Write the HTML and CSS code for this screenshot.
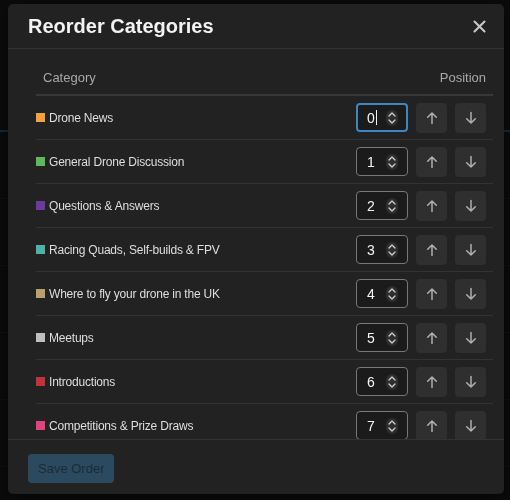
FILE: index.html
```html
<!DOCTYPE html>
<html lang="en">
<head>
  <meta charset="UTF-8" />
  <meta name="viewport" content="width=device-width, initial-scale=1.0" />
  <title>Reorder Categories</title>
  <link rel="stylesheet" href="styles.css">
</head>
<body>
  <!-- forum page behind the dialog, dimmed by the backdrop -->
  <div class="page">
    <div class="page-row link"></div>
    <div class="page-row"></div>
    <div class="page-row"></div>
    <div class="page-row"></div>
    <div class="page-row"></div>
    <div class="page-row"></div>
  </div>
  <div class="backdrop"></div>

  <div class="modal">
    <div class="modal-header">
      <h2 class="modal-title">Reorder Categories</h2>
      <button class="close-btn" title="close">
        <svg width="13" height="13" viewBox="0 0 13 13">
          <path d="M1.5 1.5 L11.5 11.5 M11.5 1.5 L1.5 11.5" stroke="#c8c8c8" stroke-width="2.1" stroke-linecap="round" />
        </svg>
      </button>
    </div>

    <div class="modal-body">
      <table class="reorder-table">
        <thead>
          <tr>
            <th class="col-name">Category</th>
            <th class="col-pos">Position</th>
          </tr>
        </thead>
        <tbody id="rows"></tbody>
      </table>
    </div>

    <div class="modal-footer">
      <button class="save-btn" disabled>Save Order</button>
    </div>
  </div>

  <script>
    var categories = [
      { name: "Drone News", color: "#f5a23e" },
      { name: "General Drone Discussion", color: "#5fb85b" },
      { name: "Questions & Answers", color: "#6b3a9c" },
      { name: "Racing Quads, Self-builds & FPV", color: "#4db3a6" },
      { name: "Where to fly your drone in the UK", color: "#b89f6b" },
      { name: "Meetups", color: "#bfbfbf" },
      { name: "Introductions", color: "#c1323c" },
      { name: "Competitions & Prize Draws", color: "#e2427f" }
    ];

    var upIcon = '<svg width="14" height="14" viewBox="0 0 14 14"><path d="M7 12.5 V2 M2.7 6.3 L7 2 L11.3 6.3" fill="none" stroke="#b0b0b0" stroke-width="1.5" stroke-linecap="round" stroke-linejoin="round"/></svg>';
    var downIcon = '<svg width="14" height="14" viewBox="0 0 14 14"><path d="M7 1.5 V12 M2.7 7.7 L7 12 L11.3 7.7" fill="none" stroke="#b0b0b0" stroke-width="1.5" stroke-linecap="round" stroke-linejoin="round"/></svg>';
    var spinIcon = '<svg width="10" height="14" viewBox="0 0 10 14"><path d="M2 5 L5 2 L8 5 M2 9 L5 12 L8 9" fill="none" stroke="#d0d0d0" stroke-width="1.3" stroke-linecap="round" stroke-linejoin="round"/></svg>';

    var tbody = document.getElementById("rows");
    categories.forEach(function (cat, i) {
      var tr = document.createElement("tr");
      tr.innerHTML =
        '<td class="col-name"><span class="cat-badge">' +
          '<span class="swatch" style="background:' + cat.color + '"></span>' +
          '<span class="cat-name"></span></span></td>' +
        '<td class="col-pos"><div class="pos-controls">' +
          '<div class="num-input' + (i === 0 ? ' focused' : '') + '">' +
            '<span class="num-value">' + i + (i === 0 ? '<span class="caret"></span>' : '') + '</span>' +
            '<span class="spinner">' + spinIcon + '</span>' +
          '</div>' +
          '<button class="move-btn">' + upIcon + '</button>' +
          '<button class="move-btn">' + downIcon + '</button>' +
        '</div></td>';
      tr.querySelector(".cat-name").textContent = cat.name;
      tbody.appendChild(tr);
    });
  </script>
</body>
</html>
```

FILE: styles.css
```css
body {
  margin: 0;
  height: 500px;
  overflow: hidden;
  background: #1c1c1c;
  font-family: 'Liberation Sans', Arial, sans-serif;
}

/* page under the dialog */
.page {
  padding-top: 86px;
  width: 510px;
}
.page-row {
  height: 66px;
  border-bottom: 1px solid #2c2c2c;
}
.page-row.link {
  height: 44px;
  border-bottom: 2px solid #2f6e9c;
}
.backdrop {
  position: fixed;
  inset: 0;
  background: rgba(0, 0, 0, 0.6);
}

/* dialog */
.modal {
  position: fixed;
  top: 4px;
  left: 8px;
  width: 496px;
  height: 490px;
  background: #222;
  border-radius: 5px;
  display: flex;
  flex-direction: column;
  box-shadow: 0 4px 16px rgba(0, 0, 0, 0.6);
}
.modal-header {
  height: 44px;
  flex-shrink: 0;
  display: flex;
  align-items: center;
  justify-content: space-between;
  padding: 0 18px 0 20px;
  border-bottom: 1px solid #333;
}
.modal-title {
  margin: 0;
  font-size: 20px;
  font-weight: bold;
  color: #f2f2f2;
}
.close-btn {
  background: none;
  border: 0;
  padding: 0;
  width: 13px;
  height: 13px;
  display: flex;
  cursor: pointer;
}

.modal-body {
  flex: 1;
  overflow: hidden;
  padding: 12px 11px 0 28px;
}
.reorder-table {
  width: 100%;
  border-collapse: collapse;
}
.reorder-table th {
  height: 33px;
  padding: 0 7px;
  font-size: 13px;
  font-weight: normal;
  color: #a8a8a8;
  border-bottom: 2px solid #383838;
}
.reorder-table th.col-name {
  text-align: left;
}
.reorder-table th.col-pos {
  text-align: right;
}
.reorder-table td {
  height: 43px;
  padding: 0;
  border-bottom: 1px solid #333;
}
.cat-badge {
  display: flex;
  align-items: center;
  gap: 4px;
  font-size: 12px;
  letter-spacing: -0.2px;
  color: #dedede;
}
.swatch {
  width: 9px;
  height: 9px;
  flex-shrink: 0;
}
.pos-controls {
  display: flex;
  justify-content: flex-end;
  align-items: center;
  gap: 8px;
  padding-right: 7px;
}
.num-input {
  width: 52px;
  height: 29px;
  box-sizing: border-box;
  border: 1px solid #777;
  border-radius: 4px;
  background: #1b1b1b;
  display: flex;
  align-items: center;
  padding: 0 9px 0 10px;
}
.num-input.focused {
  border: 2px solid #3e86bf;
  padding: 0 8px 0 9px;
}
.num-value {
  flex: 1;
  font-size: 14px;
  color: #f4f4f4;
  display: flex;
  align-items: center;
}
.caret {
  width: 1px;
  height: 15px;
  background: #f4f4f4;
  margin-left: 1px;
}
.spinner {
  width: 12px;
  height: 16px;
  border-radius: 6px;
  background: #2e2e2e;
  display: flex;
  align-items: center;
  justify-content: center;
}
.move-btn {
  width: 31px;
  height: 30px;
  border: 0;
  border-radius: 4px;
  background: #2f2f2f;
  display: flex;
  align-items: center;
  justify-content: center;
  padding: 0;
  cursor: pointer;
}

.modal-footer {
  height: 55px;
  flex-shrink: 0;
  border-top: 1px solid #333;
  padding: 14px 20px 0 20px;
  box-sizing: border-box;
}
.save-btn {
  height: 29px;
  padding: 0 10px;
  border: 0;
  border-radius: 4px;
  background: #2b4a5f;
  color: #1b2a35;
  font-family: 'Liberation Sans', Arial, sans-serif;
  font-size: 13px;
}
```
